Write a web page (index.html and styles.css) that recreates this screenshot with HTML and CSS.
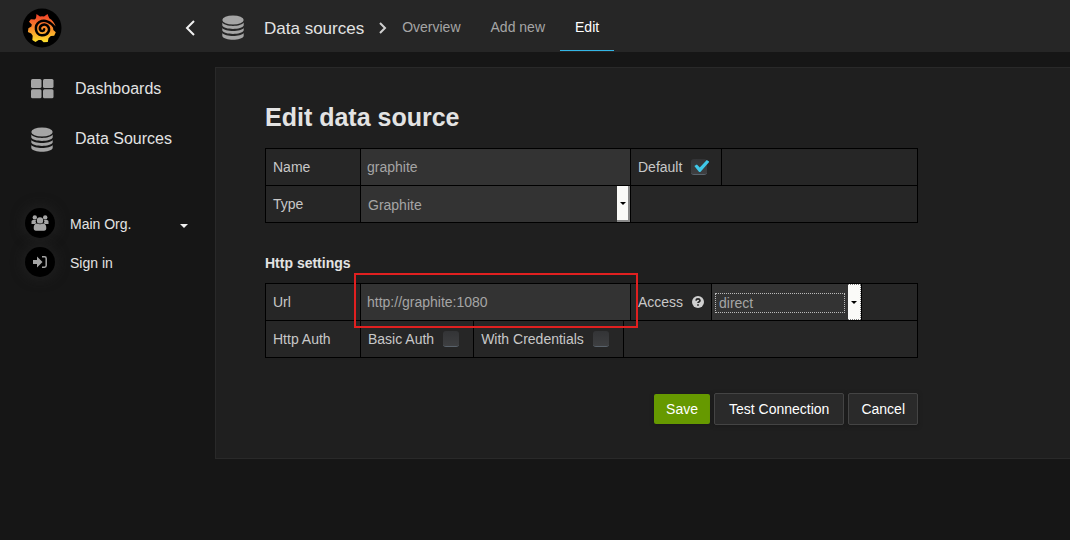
FILE: index.html
```html
<!DOCTYPE html>
<html lang="en">
<head>
<meta charset="utf-8">
<title>Edit data source</title>
<link rel="stylesheet" href="styles.css">
</head>
<body>
<svg class="sprite" aria-hidden="true">
  <symbol id="db" viewBox="0 0 22 26">
    <ellipse cx="11" cy="5" rx="10.7" ry="4.6"/>
    <path d="M.3 7.5C3 12 19 12 21.7 7.500V10.500C20 15 2 15 .3 10.500z"/>
    <path d="M.3 13C3 17 19 17 21.700 13V15.500C20 20 2 20 .3 15.500z"/>
    <path d="M.3 18C3 22 19 22 21.700 18V21C20 26 2 26 .3 21z"/>
  </symbol>
</svg>
<header class="topbar">
  <div class="brand">
    <a href="#" class="logo" aria-label="Home">
      <svg viewBox="0 0 40 40" width="40" height="40">
        <defs><linearGradient id="flame" gradientUnits="userSpaceOnUse" x1="0" y1="6" x2="0" y2="34"><stop offset="0" stop-color="#f03e2a"/><stop offset=".5" stop-color="#f98a2c"/><stop offset="1" stop-color="#fce02c"/></linearGradient></defs>
        <circle cx="20" cy="20" r="19.500" fill="#000"/>
        <path fill="url(#flame)" d="M14.500 6L18 8.600Q20 8.100 22 8.600L25.500 6l1.700 4.200Q32 13 33.500 18.300L31 17.500 31.300 22l2.500 2.200-1.600 3.600-3.400.2-2.300 2.200-.7 3.800-4.200.2-2.400-2.200h-2.600L13.500 34l-3.200-2 .4-4.200-1.500-2.200L5.900 24l.5-3.800 3-1.600.4-2L7 13.800l1.800-2.600 3.800.3 1.400-1.200z"/>
        <path fill="none" stroke="#000" stroke-width="2.500" stroke-linecap="round" d="M33 20C29 13.500 22.500 11.300 17.300 14 12 17.500 13 26.300 19.500 27.300 26 28 29 21.500 25.500 17.800 22 14.800 17 17.500 18 21.500 19 23.800 22 23.300 22.200 21.300"/>
      </svg>
    </a>
    <button class="collapse" aria-label="Collapse menu"><svg viewBox="0 0 10 16" width="10" height="16"><path d="M9 1L2 8l7 7"/></svg></button>
  </div>
  <svg class="db-icon" aria-hidden="true"><use href="#db"/></svg>
  <span class="section">Data sources</span>
  <svg class="crumb" viewBox="0 0 8 12"><path d="M1 1l5 5-5 5"/></svg>
  <nav class="tabs"><a href="#">Overview</a><a href="#">Add new</a><a href="#" class="active">Edit</a></nav>
</header>
<div class="layout">
  <aside class="sidebar">
    <nav class="menu">
      <a href="#"><svg class="grid-icon" viewBox="0 0 23 20"><rect x="0" y="0" width="10.500" height="9" rx="1.500"/><rect x="12" y="0" width="10.500" height="9" rx="1.500"/><rect x="0" y="10.300" width="10.500" height="9" rx="1.500"/><rect x="12" y="10.300" width="10.500" height="9" rx="1.500"/></svg>Dashboards</a>
      <a href="#"><svg class="db-icon" aria-hidden="true"><use href="#db"/></svg>Data Sources</a>
    </nav>
    <nav class="account">
      <a href="#"><span class="disc"><svg viewBox="0 0 18 16" width="18" height="16"><circle cx="3.800" cy="2.400" r="2.200"/><circle cx="14.200" cy="2.400" r="2.200"/><path d="M.5 9V6.500Q.5 5 2 5h3q-1 2 .3 3L4 9zM17.500 9V6.500Q17.500 5 16 5h-3q1 2-.3 3L14 9z"/><circle cx="9" cy="5.400" r="3.200"/><path d="M2.700 13q0-4.500 3.300-4.500 3 1.400 6 0 3.300 0 3.300 4.500 0 2.700-2.300 2.700H5q-2.300 0-2.300-2.700z"/></svg></span><span>Main Org.</span><i class="caret"></i></a>
      <a href="#"><span class="disc"><svg viewBox="0 0 14 12" width="14" height="12"><path d="M0 4h4V.5L9.500 6 4 11.500V8H0z"/><path class="line" d="M9 .8h2.500q1.700 0 1.700 1.700v7q0 1.700-1.700 1.700H9"/></svg></span><span>Sign in</span></a>
    </nav>
  </aside>
  <main class="panel">
    <form class="form">
      <h1>Edit data source</h1>
      <div class="rows">
        <div class="row">
          <label class="cell key" for="name">Name</label>
          <input class="cell text" id="name" type="text" value="graphite">
          <label class="cell check">Default <input type="checkbox" checked></label>
        </div>
        <div class="row">
          <label class="cell key" for="type">Type</label>
          <span class="cell pick wide"><select id="type"><option>Graphite</option></select><i class="arrow"></i></span>
        </div>
      </div>
      <h2>Http settings</h2>
      <div class="rows">
        <div class="row">
          <label class="cell key" for="url">Url</label>
          <span class="cell marked"><input class="text" id="url" type="text" value="http://graphite:1080"></span>
          <label class="cell access" for="access">Access <svg viewBox="0 0 12 12" width="12" height="12"><circle cx="6" cy="6" r="6"/><path d="M4 4.600Q4.200 2.900 6 2.900T8 4.500Q8 5.400 6.900 5.900 6 6.300 6 7.100M6 8.300v1.500"/></svg></label>
          <span class="cell pick focus"><select id="access"><option>direct</option></select><i class="arrow"></i></span>
        </div>
        <div class="row">
          <span class="cell key">Http Auth</span>
          <label class="cell check">Basic Auth <input type="checkbox"></label>
          <label class="cell check">With Credentials <input type="checkbox"></label>
        </div>
      </div>
      <div class="actions"><button type="button" class="save">Save</button><button type="button" class="test">Test Connection</button><button type="button">Cancel</button></div>
    </form>
  </main>
</div>
</body>
</html>
```
FILE: styles.css
```css
* { box-sizing: border-box; }
body { margin: 0; min-height: 100vh; background: #161616; color: #c8c8c8; font: 14px/20px "Liberation Sans", Arial, sans-serif; overflow-x: hidden; }
a { color: inherit; text-decoration: none; }
button, input, select { font: inherit; color: inherit; margin: 0; }
.sprite { position: absolute; width: 0; height: 0; }

.topbar { display: flex; align-items: center; height: 52px; background: #262626; }
.brand { display: flex; align-items: center; justify-content: space-between; width: 222px; padding: 4px 27px 0 22px; }
.logo, .logo svg { display: block; }
.collapse { padding: 0; border: 0; background: none; display: flex; }
.collapse path { fill: none; stroke: #f0f0f0; stroke-width: 2; }
.db-icon { width: 22px; height: 26px; fill: #a5a5a5; flex: none; }
.topbar .db-icon { margin-top: 3px; }
.section { margin: 5px 15px 0 20px; font-size: 17px; color: #e3e3e3; }
.crumb { width: 8px; height: 12px; margin-top: 4px; fill: none; stroke: #d0d0d0; stroke-width: 2; }
.tabs { display: flex; align-self: stretch; }
.tabs a { display: flex; align-items: center; padding: 3px 15px 0; border-bottom: 1px solid transparent; margin-bottom: 1px; color: #a5a5a5; }
.tabs .active { color: #fff; border-color: #33b5e5; }

.layout { display: flex; align-items: flex-start; }
.sidebar { width: 215px; flex: none; }
.menu { display: flex; flex-direction: column; padding-top: 12px; font-size: 16px; color: #e3e3e3; }
.menu a { display: flex; align-items: center; gap: 22px; height: 50px; padding-left: 31px; }
.menu .db-icon { margin-top: 2px; }
.grid-icon { width: 23px; height: 20px; margin-right: -1px; fill: #a5a5a5; }
.account { display: flex; flex-direction: column; gap: 9px; padding: 44px 27px 0 25px; color: #e3e3e3; }
.account a { display: flex; align-items: center; gap: 15px; height: 30px; line-height: 22px; }
.account a > span:nth-child(2) { padding-top: 2px; }
.disc { display: flex; align-items: center; justify-content: center; width: 30px; height: 30px; border-radius: 50%; background: #000; box-shadow: 0 0 14px #242424; }
.disc svg { fill: #a5a5a5; }
.disc .line { fill: none; stroke: #a5a5a5; stroke-width: 1.500; }
.caret { margin-left: auto; margin-top: 5px; border: 4px solid transparent; border-top-color: #f0f0f0; border-bottom: 0; }

.panel { flex: 1; margin-top: 15px; padding: 34px 50px 33px 49px; background: #1f1f1f; border: 1px solid #292929; border-right: 0; }
.form { max-width: 653px; }
h1 { margin: 0 0 16px; font-size: 25px; line-height: 30px; color: #e3e3e3; }
h2 { margin: 30px 0 10px; font-size: 14px; line-height: 20px; color: #e3e3e3; }
.rows { border: 1px solid #000; border-bottom: 0; background: #262626; }
.row { display: flex; height: 37px; border-bottom: 1px solid #000; }
.cell { display: flex; align-items: center; border: 0; border-right: 1px solid #000; }
.key { width: 95px; padding-left: 7px; }
.text { width: 270px; padding: 0 6px; background: #333; color: #a5a5a5; border-radius: 0; outline: 0; }
.check { gap: 9px; padding: 0 14px 0 7px; }
.check input { appearance: none; width: 16px; height: 16px; border-radius: 3px; background: linear-gradient(#333436, #3e3f41); border-bottom: 1px solid #59626b; position: relative; }
.check input:checked::after { content: ""; position: absolute; left: 2px; top: 1px; width: 16px; height: 12px; background: #3fc8e8; clip-path: polygon(6% 50%, 22% 38%, 40% 62%, 84% 0, 100% 14%, 44% 100%, 36% 100%); }
.pick { position: relative; width: 150px; background: #333; }
.wide { width: 270px; }
.pick select { appearance: none; width: 100%; height: 36px; padding: 2px 20px 0 7px; border: 0; border-radius: 0; background: none; color: #a5a5a5; outline: 0; }
.arrow { position: absolute; right: 0; top: 0; bottom: 0; width: 13px; display: grid; place-items: center; background: #fafaf8; border-right: 2px solid #888; border-bottom: 2px solid #888; pointer-events: none; }
.arrow::after { content: ""; border: 3px solid transparent; border-top-color: #000; border-bottom: 0; }
.focus::before { content: ""; position: absolute; left: 3px; right: 16px; top: 9px; height: 18px; border: 1px dotted #bbb; pointer-events: none; }
.focus .arrow { border: 1px dotted #777; border-left: 0; }
.marked { position: relative; }
.marked .text { width: 269px; height: 36px; border: 0; }
.marked::after { content: ""; position: absolute; inset: -11px -8px -8px -7px; border: 2px solid #e02020; pointer-events: none; z-index: 1; }
.access { width: 81px; padding-left: 7px; gap: 9px; }
.access svg { fill: #d0d0d0; }
.access path { fill: none; stroke: #262626; stroke-width: 1.700; }
.actions { display: flex; justify-content: flex-end; align-items: center; gap: 4px; margin-top: 35px; }
.actions button { height: 32px; padding: 0 12px; border: 1px solid #444; border-radius: 2px; background: #2a2a2a; color: #fff; box-shadow: 0 1px 4px #1a1a1a; }
.actions .test { padding: 0 14px; }
.actions .save { height: 30px; border: 0; background: #669900; }
```
